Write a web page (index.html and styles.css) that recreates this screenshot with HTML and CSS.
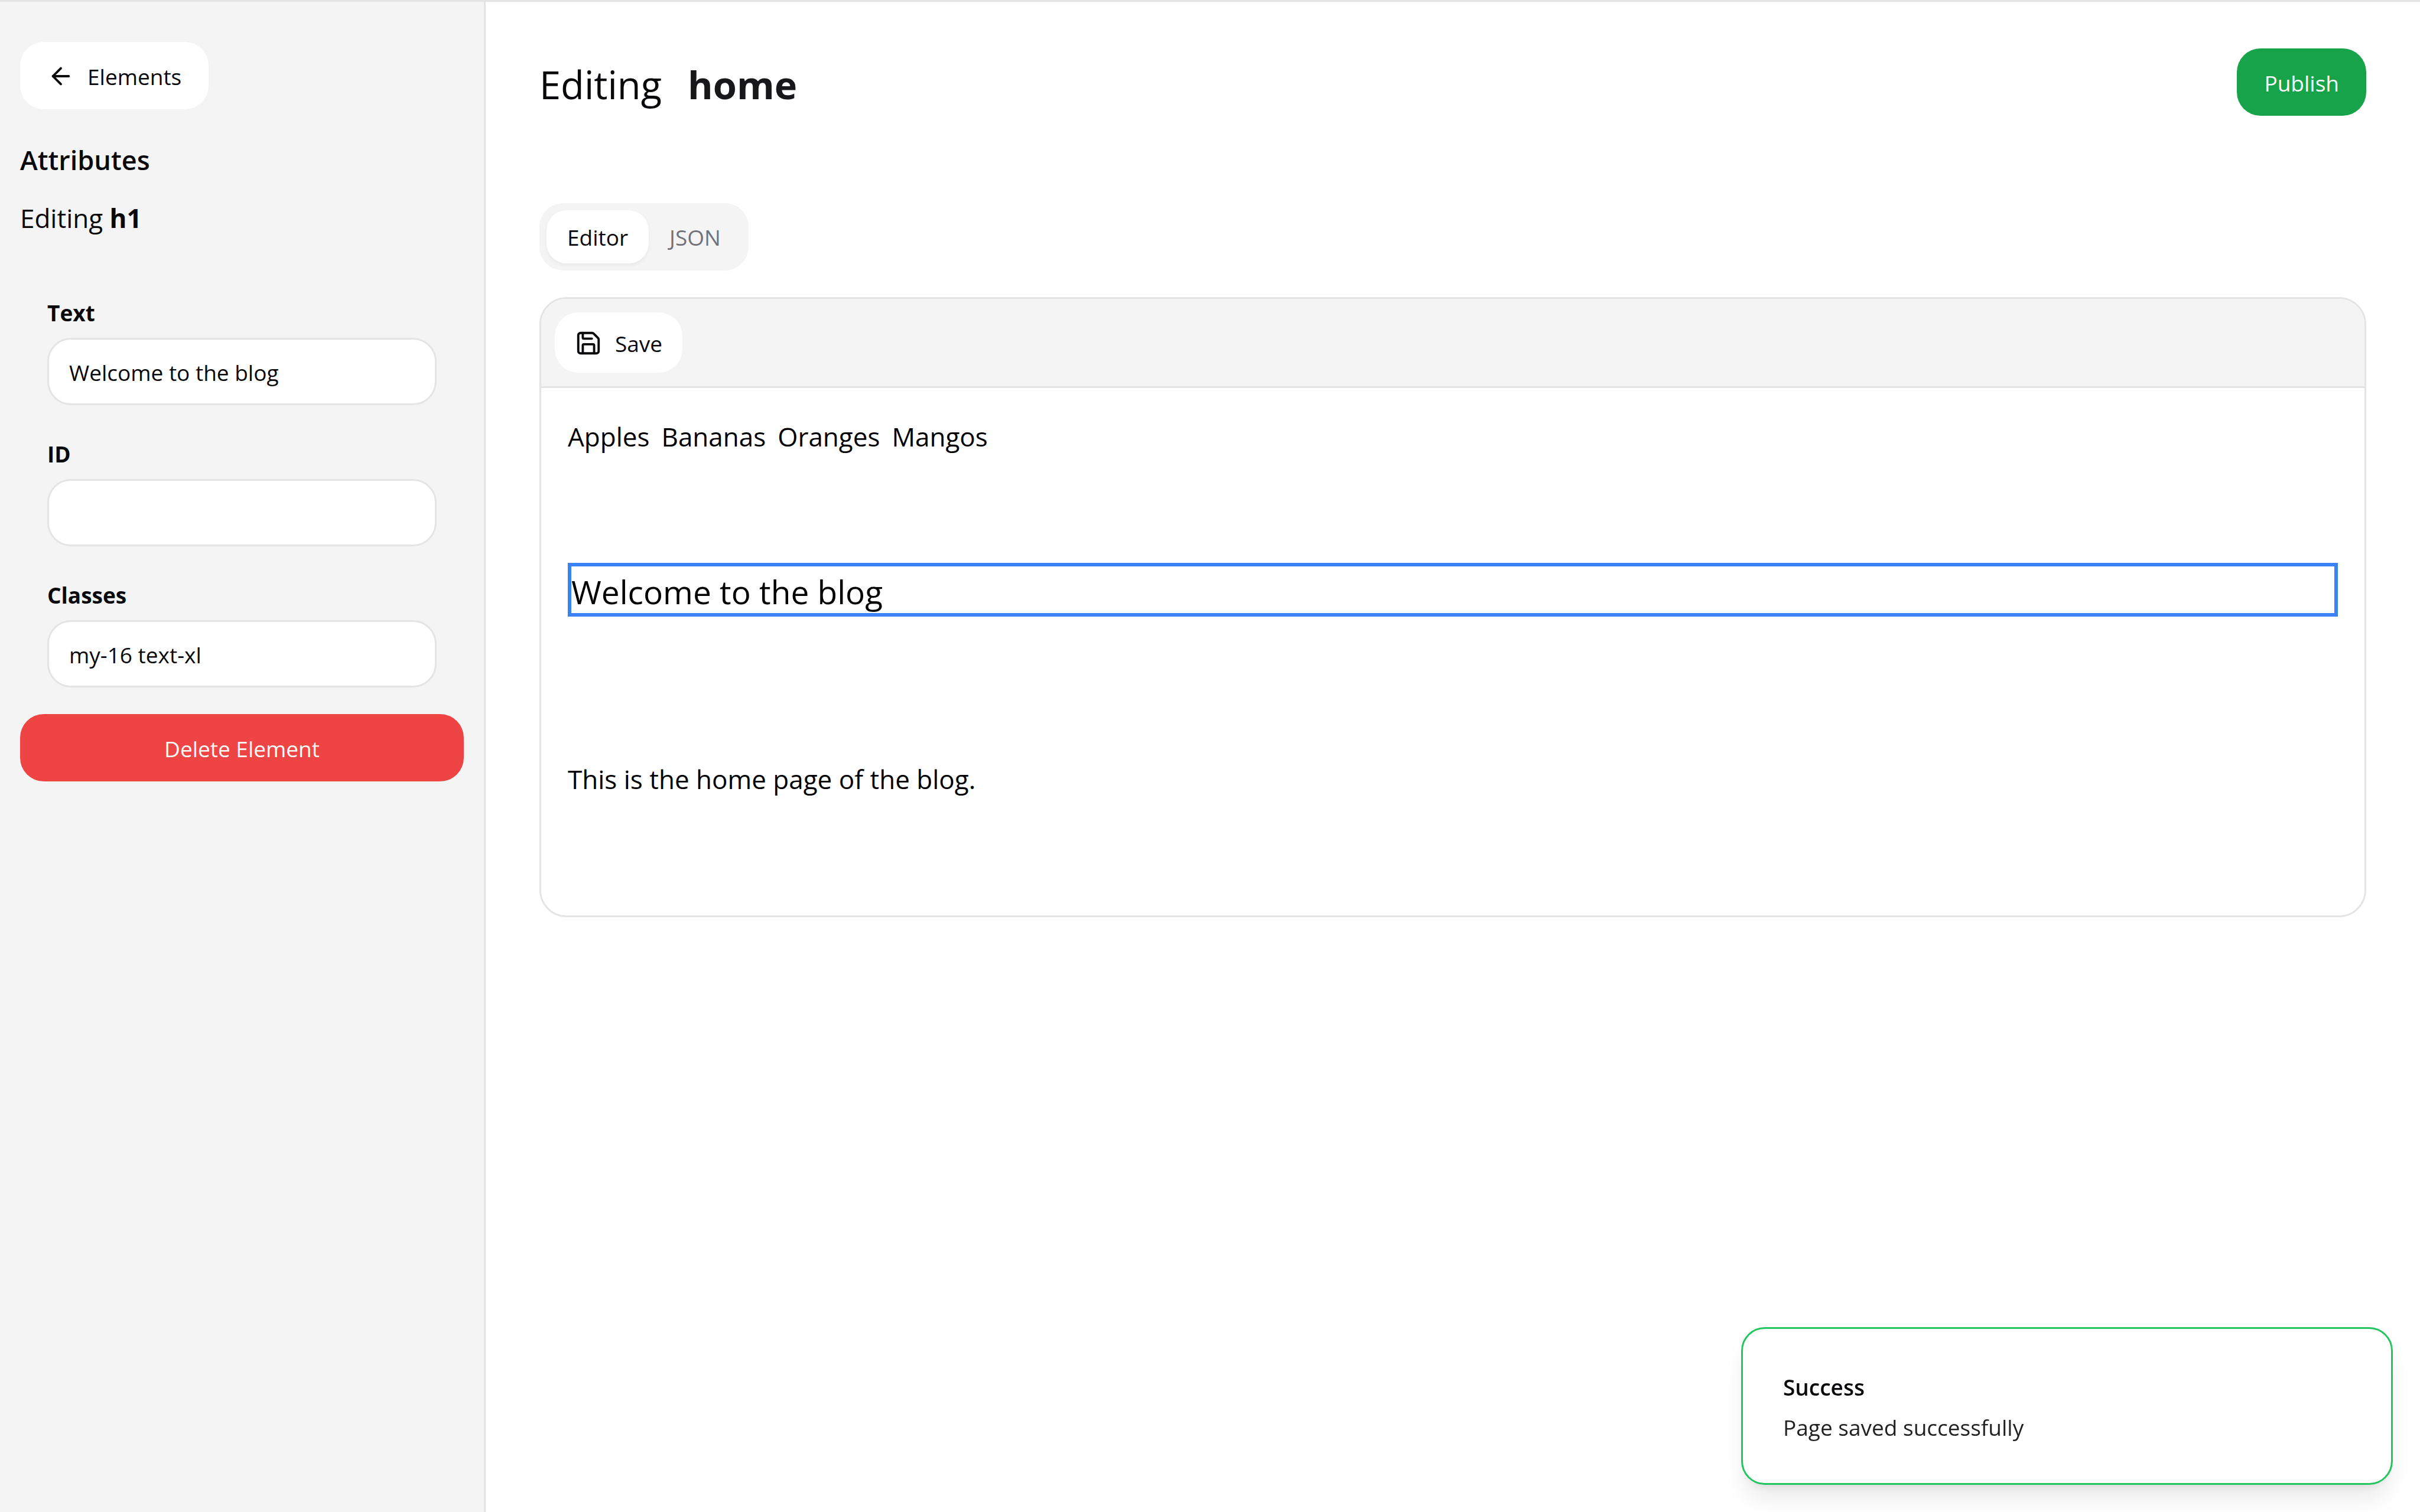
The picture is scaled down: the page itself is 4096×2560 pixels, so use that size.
FILE: index.html
```html
<!DOCTYPE html>
<html lang="en">
<head>
<meta charset="utf-8">
<meta name="viewport" content="width=device-width, initial-scale=1">
<title>Editing home</title>
<link rel="stylesheet" href="styles.css">
</head>
<body>
<div class="app">
  <aside class="sidebar">
    <button type="button" class="button button-light back">
      <svg class="icon" viewBox="0 0 24 24" aria-hidden="true"><path d="m12 19-7-7 7-7"/><path d="M19 12H5"/></svg>
      Elements
    </button>
    <h2 class="sidebar-title">Attributes</h2>
    <p class="sidebar-subtitle">Editing <strong>h1</strong></p>
    <form class="fields">
      <div class="field">
        <label for="attr-text">Text</label>
        <input id="attr-text" type="text" value="Welcome to the blog">
      </div>
      <div class="field">
        <label for="attr-id">ID</label>
        <input id="attr-id" type="text" value="">
      </div>
      <div class="field">
        <label for="attr-classes">Classes</label>
        <input id="attr-classes" type="text" value="my-16 text-xl" spellcheck="false">
      </div>
    </form>
    <button type="button" class="button button-danger">Delete Element</button>
  </aside>

  <main class="main">
    <header class="page-header">
      <h1 class="page-title"><span>Editing</span><strong>home</strong></h1>
      <button type="button" class="button button-success">Publish</button>
    </header>

    <div class="tabs" role="tablist">
      <button type="button" class="tab tab-active" role="tab" aria-selected="true">Editor</button>
      <button type="button" class="tab" role="tab" aria-selected="false">JSON</button>
    </div>

    <section class="panel">
      <div class="toolbar">
        <button type="button" class="button button-light button-small">
          <svg class="icon" viewBox="0 0 24 24" aria-hidden="true"><path d="M15.2 3a2 2 0 0 1 1.4.6l3.8 3.8a2 2 0 0 1 .6 1.4V19a2 2 0 0 1-2 2H5a2 2 0 0 1-2-2V5a2 2 0 0 1 2-2z"/><path d="M17 21v-7a1 1 0 0 0-1-1H8a1 1 0 0 0-1 1v7"/><path d="M7 3v4a1 1 0 0 0 1 1h7"/></svg>
          Save
        </button>
      </div>
      <div class="canvas">
        <ul class="fruits">
          <li>Apples</li>
          <li>Bananas</li>
          <li>Oranges</li>
          <li>Mangos</li>
        </ul>
        <h1 class="selected">Welcome to the blog</h1>
        <p class="intro">This is the home page of the blog.</p>
      </div>
    </section>
  </main>
</div>

<div class="toast" role="status">
  <div class="toast-title">Success</div>
  <div class="toast-text">Page saved successfully</div>
</div>
</body>
</html>
```
FILE: styles.css
```css
:root {
  --ink: #09090b;
  --muted: #f4f4f5;
  --muted-ink: #71717a;
  --line: #e4e4e7;
  --radius: 40px;
  --text-sm: 37px;
  --text-base: 44px;
  --text-lg: 45px;
  --text-xl: 55px;
  --text-2xl: 65px;
}

* {
  box-sizing: border-box;
  margin: 0;
  padding: 0;
}

body {
  min-height: 100vh;
  border-top: 3px solid var(--line);
  background: #fff;
  color: var(--ink);
  font-family: "Open Sans", "Noto Sans", sans-serif;
  font-size: var(--text-base);
  line-height: 68px;
  display: flex;
}

button,
input {
  font: inherit;
  color: inherit;
}

.app {
  flex: 1;
  display: grid;
  grid-template-columns: 822px minmax(0, 1fr);
}

/* Buttons */
.button {
  display: inline-flex;
  align-items: center;
  justify-content: center;
  gap: 22px;
  height: 114px;
  padding: 2px 46px 0;
  border: 0;
  border-radius: var(--radius);
  font-size: var(--text-sm);
  line-height: 57px;
  white-space: nowrap;
}

.button-light {
  background: #fff;
}

.button-small {
  height: 102px;
  padding: 2px 34px 0;
}

.button-danger {
  background: #ef4444;
  color: #fafafa;
}

.button-success {
  background: #16a34a;
  color: #fafafa;
}

.icon {
  width: 46px;
  height: 46px;
  fill: none;
  stroke: currentColor;
  stroke-width: 2;
  stroke-linecap: round;
  stroke-linejoin: round;
}

/* Sidebar */
.sidebar {
  display: flex;
  flex-direction: column;
  padding: 68px 34px;
  background: var(--muted);
  border-right: 3px solid var(--line);
}

.back {
  align-self: flex-start;
}

.sidebar-title {
  margin-top: 46px;
  font-size: var(--text-lg);
  font-weight: 600;
  line-height: 80px;
}

.sidebar-subtitle {
  margin-top: 24px;
}

.fields {
  display: flex;
  flex-direction: column;
  gap: 63px;
  margin: 107px 0 45px;
  padding: 0 46px;
}

.field {
  display: flex;
  flex-direction: column;
  gap: 22px;
}

.field label {
  font-size: var(--text-sm);
  font-weight: 700;
  line-height: 40px;
}

.field input {
  width: 100%;
  height: 114px;
  padding: 2px 34px 0;
  background: #fff;
  border: 3px solid var(--line);
  border-radius: var(--radius);
  font-size: var(--text-sm);
}

/* Main column */
.main {
  padding: 79px 91px;
}

.page-header {
  display: flex;
  align-items: flex-end;
  justify-content: space-between;
}

.page-title {
  display: flex;
  gap: 44px;
  font-size: var(--text-2xl);
  font-weight: 400;
  line-height: 106px;
}

.page-title strong {
  color: #18181b;
  font-weight: 700;
}

.tabs {
  display: inline-flex;
  margin-top: 148px;
  padding: 12px;
  background: var(--muted);
  border-radius: var(--radius);
  vertical-align: top;
}

.tab {
  height: 90px;
  padding: 2px 35px 0;
  border: 0;
  border-radius: 34px;
  background: transparent;
  color: var(--muted-ink);
  font-size: var(--text-sm);
}

.tab-active {
  background: #fff;
  color: var(--ink);
  box-shadow: 0 3px 6px rgb(0 0 0 / 5%);
}

.panel {
  margin-top: 45px;
  border: 3px solid var(--line);
  border-radius: 46px;
  overflow: hidden;
}

.toolbar {
  display: flex;
  padding: 23px;
  background: var(--muted);
  border-bottom: 3px solid var(--line);
}

.canvas {
  padding: 48px 45px;
  color: #000;
}

.fruits {
  display: flex;
  gap: 20px;
  list-style: none;
}

.selected {
  margin: 180px 0;
  padding-top: 6px;
  border: 6px solid #3b82f6;
  font-size: var(--text-xl);
  font-weight: 400;
  line-height: 73px;
}

.intro {
  padding: 61px 0 149px;
}

/* Toast */
.toast {
  position: fixed;
  right: 46px;
  bottom: 46px;
  display: flex;
  flex-direction: column;
  gap: 11px;
  width: 1103px;
  padding: 70px 68px 66px;
  background: #fff;
  border: 3px solid #22c55e;
  border-radius: var(--radius);
  box-shadow: 0 28px 43px -9px rgb(0 0 0 / 10%), 0 11px 17px -11px rgb(0 0 0 / 10%);
  font-size: var(--text-sm);
  line-height: 57px;
}

.toast-title {
  font-weight: 600;
}

.toast-text {
  opacity: 0.9;
}
```
